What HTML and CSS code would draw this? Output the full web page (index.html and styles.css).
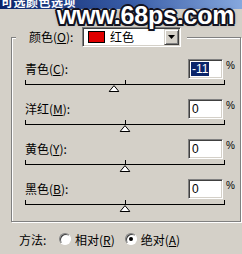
FILE: index.html
```html
<!DOCTYPE html>
<html lang="zh">
<head>
<meta charset="utf-8">
<link rel="stylesheet" href="styles.css">
</head>
<body>
<div class="window">
  <div class="titlebar"><span class="title">可选颜色选项</span></div>
  <div class="watermark">www.68ps.com</div>

  <fieldset class="group">
    <legend class="group-head">
      <span class="head-label">颜色(<u>O</u>):</span>
      <span class="select">
        <span class="swatch"></span>
        <span class="select-text">红色</span>
        <span class="select-btn">
          <svg width="7" height="4" viewBox="0 0 7 4"><polygon points="0,0 7,0 3.5,4" fill="#000"/></svg>
        </span>
      </span>
    </legend>

    <div class="row">
      <div class="row-top">
        <span class="label">青色(<u>C</u>):</span>
        <span class="num"><span class="sel">-11</span></span>
        <span class="pct">%</span>
      </div>
      <div class="slider"><div class="track"></div><span class="thumb" style="left:44.5%"><svg width="11" height="7" viewBox="0 0 11 7"><polygon points="5.5,0.6 10.4,6.5 0.6,6.5" fill="#fff" stroke="#000" stroke-width="1"/></svg></span></div>
    </div>

    <div class="row">
      <div class="row-top">
        <span class="label">洋红(<u>M</u>):</span>
        <span class="num">0</span>
        <span class="pct">%</span>
      </div>
      <div class="slider"><div class="track"></div><span class="thumb" style="left:50%"><svg width="11" height="7" viewBox="0 0 11 7"><polygon points="5.5,0.6 10.4,6.5 0.6,6.5" fill="#fff" stroke="#000" stroke-width="1"/></svg></span></div>
    </div>

    <div class="row">
      <div class="row-top">
        <span class="label">黄色(<u>Y</u>):</span>
        <span class="num">0</span>
        <span class="pct">%</span>
      </div>
      <div class="slider"><div class="track"></div><span class="thumb" style="left:50%"><svg width="11" height="7" viewBox="0 0 11 7"><polygon points="5.5,0.6 10.4,6.5 0.6,6.5" fill="#fff" stroke="#000" stroke-width="1"/></svg></span></div>
    </div>

    <div class="row">
      <div class="row-top">
        <span class="label">黑色(<u>B</u>):</span>
        <span class="num">0</span>
        <span class="pct">%</span>
      </div>
      <div class="slider"><div class="track"></div><span class="thumb" style="left:50%"><svg width="11" height="7" viewBox="0 0 11 7"><polygon points="5.5,0.6 10.4,6.5 0.6,6.5" fill="#fff" stroke="#000" stroke-width="1"/></svg></span></div>
    </div>
  </fieldset>

  <div class="method">
    <span class="method-label">方法:</span>
    <span class="radio"></span>
    <span class="radio-text">相对(<u>R</u>)</span>
    <span class="radio checked"></span>
    <span class="radio-text">绝对(<u>A</u>)</span>
  </div>
</div>
</body>
</html>
```

FILE: styles.css
```css
html, body {
  margin: 0;
  padding: 0;
  background: #d4d0c8;
}

.window {
  position: relative;
  width: 242px;
  height: 254px;
  overflow: hidden;
  background: #d4d0c8;
  font-family: "Noto Sans CJK SC", "Liberation Sans", sans-serif;
  font-size: 12px;
  color: #000;
}

.titlebar {
  height: 9px;
  overflow: hidden;
  background: linear-gradient(to right, #0a246a 0%, #3a5ea8 55%, #86a8de 100%);
}

.title {
  display: block;
  margin-top: -5px;
  padding-left: 1px;
  line-height: 14px;
  font-size: 12px;
  font-weight: bold;
  color: #fff;
  letter-spacing: 0.5px;
}

.watermark {
  position: absolute;
  left: 57px;
  top: 1px;
  font-family: "Liberation Sans", sans-serif;
  font-weight: bold;
  font-size: 25px;
  line-height: 28px;
  letter-spacing: -0.2px;
  color: #fff;
  text-shadow:
    2px 0 0 #121220, -2px 0 0 #121220, 0 2px 0 #121220, 0 -2px 0 #121220,
    1.5px 1.5px 0 #121220, -1.5px 1.5px 0 #121220, 1.5px -1.5px 0 #121220, -1.5px -1.5px 0 #121220,
    0 0 4px rgba(60, 60, 80, 0.6);
}

.group {
  margin: 18px 1px 0 11px;
  padding: 12px 8px 2px 13px;
  border: 1px solid #808080;
  box-shadow: inset 1px 1px 0 #fff, 1px 1px 0 #fff;
  min-width: 0;
}

.group-head {
  display: flex;
  align-items: center;
  height: 20px;
  margin-left: -9px;
  padding: 0 6px 0 13px;
  background: #d4d0c8;
}

.head-label {
  width: 53px;
  line-height: 20px;
}

.select {
  display: flex;
  align-items: center;
  width: 99px;
  height: 20px;
  box-sizing: border-box;
  background: #fff;
  border-style: solid;
  border-width: 1px;
  border-color: #808080 #fff #fff #808080;
  box-shadow: inset 1px 1px 0 #404040, inset -1px -1px 0 #d4d0c8;
  padding: 2px 2px 2px 5px;
}

.swatch {
  width: 17px;
  height: 12px;
  box-sizing: border-box;
  background: #e00000;
  border: 1px solid #000;
}

.select-text {
  flex: 1;
  margin-left: 5px;
  line-height: 14px;
}

.select-btn {
  display: flex;
  align-items: center;
  justify-content: center;
  width: 15px;
  height: 16px;
  box-sizing: border-box;
  margin-right: -1px;
  background: #d4d0c8;
  border-style: solid;
  border-width: 1px;
  border-color: #d4d0c8 #404040 #404040 #d4d0c8;
  box-shadow: inset 1px 1px 0 #fff, inset -1px -1px 0 #808080;
}

.row {
  height: 40px;
}

.row-top {
  display: flex;
  align-items: center;
  height: 20px;
}

.label {
  flex: 1;
  line-height: 20px;
}

.num {
  width: 35px;
  height: 20px;
  box-sizing: border-box;
  background: #fff;
  border-style: solid;
  border-width: 1px;
  border-color: #808080 #fff #fff #808080;
  box-shadow: inset 1px 1px 0 #404040, inset -1px -1px 0 #d4d0c8;
  padding: 2px 0 0 3px;
  font-family: "Liberation Sans", sans-serif;
  font-size: 12px;
  line-height: 14px;
}

.sel {
  display: inline-block;
  padding: 0 1px;
  margin-left: -1px;
  background: #0a246a;
  color: #fff;
}

.pct {
  width: 6px;
  margin-left: 3px;
  font-family: "Liberation Sans", sans-serif;
  font-size: 10px;
  line-height: 20px;
  margin-top: -6px;
}

.slider {
  position: relative;
  height: 20px;
  margin-right: 7px;
}

.track {
  position: relative;
  height: 4px;
  border-left: 1px solid #000;
  border-right: 1px solid #000;
  border-bottom: 1px solid #000;
  margin-top: 1px;
}

.track::after {
  content: "";
  position: absolute;
  left: 50%;
  top: 0;
  width: 1px;
  height: 4px;
  background: #000;
}

.thumb {
  position: absolute;
  top: 5px;
  width: 11px;
  height: 7px;
  transform: translateX(-50%);
}

.thumb svg {
  display: block;
}

.method {
  display: flex;
  align-items: center;
  height: 16px;
  margin-top: 9px;
  padding-left: 19px;
}

.method-label {
  width: 40px;
}

.radio {
  width: 12px;
  height: 12px;
  box-sizing: border-box;
  border-radius: 50%;
  border-style: solid;
  border-width: 1px;
  border-color: #808080 #fff #fff #808080;
  box-shadow: inset 1px 1px 0 #404040;
  background: #fff;
  position: relative;
  margin-right: 4px;
}

.radio.checked::after {
  content: "";
  position: absolute;
  left: 3px;
  top: 3px;
  width: 4px;
  height: 4px;
  border-radius: 50%;
  background: #000;
}

.radio-text {
  margin-right: 10px;
}
```
